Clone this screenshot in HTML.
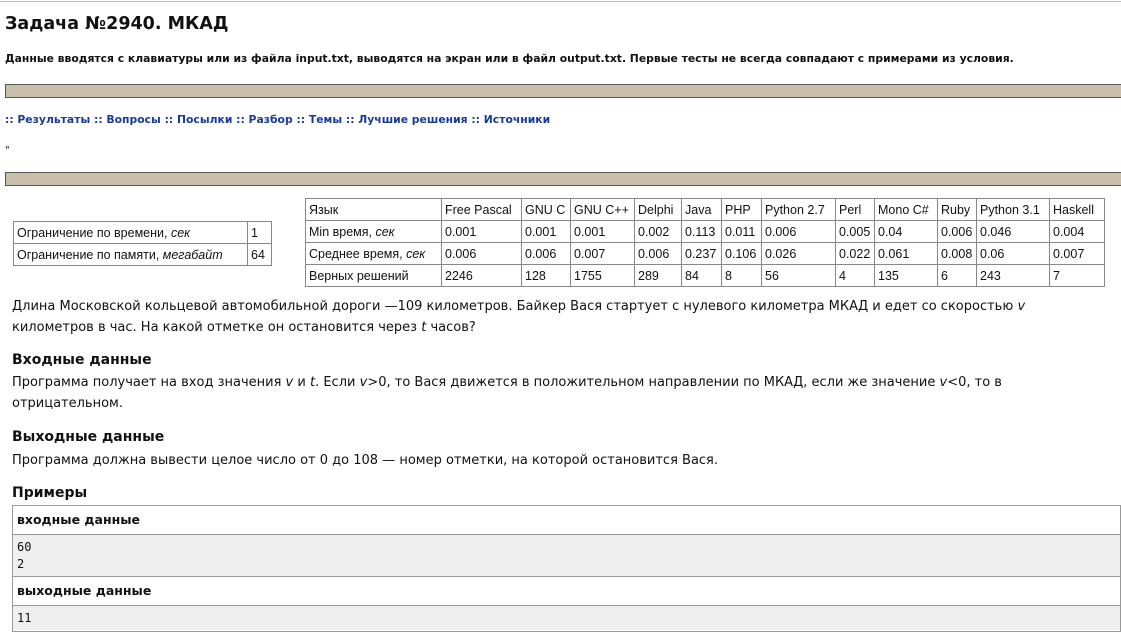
<!DOCTYPE html>
<html><head><meta charset="utf-8"><style>
body{margin:0;width:1121px;height:633px;overflow:hidden;background:#fff;font-family:"DejaVu Sans","Liberation Sans",sans-serif;color:#111;position:relative}
.a{position:absolute;white-space:nowrap}
.bar{position:absolute;left:5px;width:1116px;height:12px;background:#c8c0ac;border:1px solid #555;border-right:none}
table{border-collapse:collapse;font-family:"Liberation Sans",Arial,sans-serif;font-size:12.5px;position:absolute;table-layout:fixed}
td{border:1px solid #888;padding:0 3px;height:21px;white-space:nowrap;overflow:hidden}
.t{border:1px solid #444}
</style></head><body>
<div class="a" style="left:0;top:1px;width:1121px;height:1px;background:#c0bca8"></div>
<div class="a" style="left:5px;top:14px;font-size:17.5px;font-weight:bold">Задача №2940. МКАД</div>
<div class="a" style="left:5px;top:52px;font-size:10.8px;font-weight:bold">Данные вводятся с клавиатуры или из файла input.txt, выводятся на экран или в файл output.txt. Первые тесты не всегда совпадают с примерами из условия.</div>
<div class="bar" style="top:84px"></div>
<div class="a" style="left:5px;top:113px;font-size:10.8px;font-weight:bold;color:#1a3b94">:: Результаты :: Вопросы :: Посылки :: Разбор :: Темы :: Лучшие решения :: Источники</div>
<div class="a" style="left:5px;top:145px;font-size:10px">"</div>
<div class="bar" style="top:172px"></div>

<table class="t" style="left:13px;top:221px;width:258px">
<col style="width:234px"><col style="width:24px">
<tr><td>Ограничение по времени, <i>сек</i></td><td>1</td></tr>
<tr><td>Ограничение по памяти, <i>мегабайт</i></td><td>64</td></tr>
</table>

<table class="t" style="left:305px;top:198px;width:799px">
<col style="width:136px"><col style="width:80px"><col style="width:49px"><col style="width:64px"><col style="width:47px"><col style="width:40px"><col style="width:40px"><col style="width:74px"><col style="width:39px"><col style="width:63px"><col style="width:39px"><col style="width:73px"><col style="width:55px">
<tr><td>Язык</td><td>Free Pascal</td><td>GNU C</td><td>GNU C++</td><td>Delphi</td><td>Java</td><td>PHP</td><td>Python 2.7</td><td>Perl</td><td>Mono C#</td><td>Ruby</td><td>Python 3.1</td><td>Haskell</td></tr>
<tr><td>Min время, <i>сек</i></td><td>0.001</td><td>0.001</td><td>0.001</td><td>0.002</td><td>0.113</td><td>0.011</td><td>0.006</td><td>0.005</td><td>0.04</td><td>0.006</td><td>0.046</td><td>0.004</td></tr>
<tr><td>Среднее время, <i>сек</i></td><td>0.006</td><td>0.006</td><td>0.007</td><td>0.006</td><td>0.237</td><td>0.106</td><td>0.026</td><td>0.022</td><td>0.061</td><td>0.008</td><td>0.06</td><td>0.007</td></tr>
<tr><td>Верных решений</td><td>2246</td><td>128</td><td>1755</td><td>289</td><td>84</td><td>8</td><td>56</td><td>4</td><td>135</td><td>6</td><td>243</td><td>7</td></tr>
</table>

<div class="a" style="left:12px;top:296px;width:1075px;white-space:normal;font-size:13px;line-height:21px">Длина Московской кольцевой автомобильной дороги —109 километров. Байкер Вася стартует с нулевого километра МКАД и едет со скоростью <i>v</i> километров в час. На какой отметке он остановится через <i>t</i> часов?</div>
<div class="a" style="left:12px;top:352px;font-size:14px;font-weight:bold">Входные данные</div>
<div class="a" style="left:12px;top:372px;width:1100px;white-space:normal;font-size:13px;line-height:21px">Программа получает на вход значения <i>v</i> и <i>t</i>. Если <i>v</i>&gt;0, то Вася движется в положительном направлении по МКАД, если же значение <i>v</i>&lt;0, то в отрицательном.</div>
<div class="a" style="left:12px;top:429px;font-size:14px;font-weight:bold">Выходные данные</div>
<div class="a" style="left:12px;top:450px;font-size:13px;line-height:21px">Программа должна вывести целое число от 0 до 108 — номер отметки, на которой остановится Вася.</div>
<div class="a" style="left:12px;top:485px;font-size:14px;font-weight:bold">Примеры</div>

<div class="a" style="left:12px;top:505px;width:1107px;height:125px;border:1px solid #999">
<div style="height:28px;border-bottom:1px solid #999;font-size:12.5px;font-weight:bold;line-height:28px;padding-left:4px">входные данные</div>
<div style="height:42px;background:#efefef;border-bottom:1px solid #999;font-family:'DejaVu Sans Mono','Liberation Mono',monospace;font-size:12px;line-height:17px;padding:4px 0 0 4px;box-sizing:border-box">60<br>2</div>
<div style="height:28px;border-bottom:1px solid #999;font-size:12.5px;font-weight:bold;line-height:28px;padding-left:4px">выходные данные</div>
<div style="height:24px;background:#efefef;font-family:'DejaVu Sans Mono','Liberation Mono',monospace;font-size:12px;line-height:24px;padding-left:4px">11</div>
</div>
</body></html>
